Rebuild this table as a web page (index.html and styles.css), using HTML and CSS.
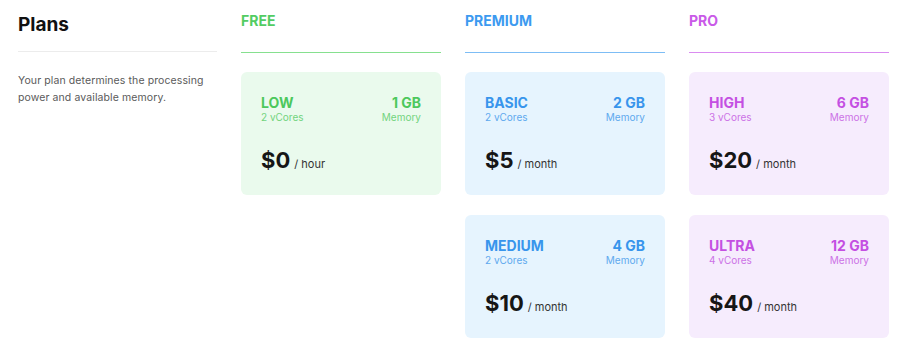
FILE: index.html
```html
<!DOCTYPE html>
<html>
<head>
<meta charset="utf-8">
<link rel="stylesheet" href="styles.css">
</head>
<body>
<div class="page">
  <section class="intro">
    <h1 class="intro-title">Plans</h1>
    <p class="intro-text">Your plan determines the processing<br>power and available memory.</p>
  </section>

  <section class="tier tier-free">
    <h2 class="tier-title">FREE</h2>
    <div class="cards">
      <div class="card">
        <div class="card-top">
          <div><div class="card-name">LOW</div><div class="card-sub">2 vCores</div></div>
          <div class="right"><div class="card-name">1 GB</div><div class="card-sub">Memory</div></div>
        </div>
        <div class="price"><span class="amount">$0</span><span class="unit">/ hour</span></div>
      </div>
    </div>
  </section>

  <section class="tier tier-premium">
    <h2 class="tier-title">PREMIUM</h2>
    <div class="cards">
      <div class="card">
        <div class="card-top">
          <div><div class="card-name">BASIC</div><div class="card-sub">2 vCores</div></div>
          <div class="right"><div class="card-name">2 GB</div><div class="card-sub">Memory</div></div>
        </div>
        <div class="price"><span class="amount">$5</span><span class="unit">/ month</span></div>
      </div>
      <div class="card">
        <div class="card-top">
          <div><div class="card-name">MEDIUM</div><div class="card-sub">2 vCores</div></div>
          <div class="right"><div class="card-name">4 GB</div><div class="card-sub">Memory</div></div>
        </div>
        <div class="price"><span class="amount">$10</span><span class="unit">/ month</span></div>
      </div>
    </div>
  </section>

  <section class="tier tier-pro">
    <h2 class="tier-title">PRO</h2>
    <div class="cards">
      <div class="card">
        <div class="card-top">
          <div><div class="card-name">HIGH</div><div class="card-sub">3 vCores</div></div>
          <div class="right"><div class="card-name">6 GB</div><div class="card-sub">Memory</div></div>
        </div>
        <div class="price"><span class="amount">$20</span><span class="unit">/ month</span></div>
      </div>
      <div class="card">
        <div class="card-top">
          <div><div class="card-name">ULTRA</div><div class="card-sub">4 vCores</div></div>
          <div class="right"><div class="card-name">12 GB</div><div class="card-sub">Memory</div></div>
        </div>
        <div class="price"><span class="amount">$40</span><span class="unit">/ month</span></div>
      </div>
    </div>
  </section>
</div>
</body>
</html>
```

FILE: styles.css
```css
* { box-sizing: border-box; }
html, body { margin: 0; padding: 0; background: #fff; }
body { font-family: Inter, "Noto Sans", sans-serif; color: #1a1a1a; }

.page {
  display: grid;
  grid-template-columns: 200px 200px 200px 200px;
  column-gap: 24px;
  padding: 0 18px 0 17px;
  align-items: start;
}

.intro { padding-left: 1px; }
.intro-title {
  margin: 0;
  height: 52px;
  padding-top: 13px;
  font-size: 19px;
  font-weight: 700;
  line-height: 23px;
  color: #111;
  border-bottom: 1px solid #ececec;
}
.intro-text {
  margin: 20px 0 0;
  white-space: nowrap;
  font-size: 10.5px;
  letter-spacing: 0.1px;
  line-height: 17px;
  color: #5a5a5a;
}

.tier-title {
  margin: 0;
  height: 53px;
  padding-top: 12px;
  font-size: 14px;
  font-weight: 700;
  line-height: 17px;
  border-bottom: 1.5px solid currentColor;
}

.cards {
  display: flex;
  flex-direction: column;
  gap: 20px;
  margin-top: 19px;
}

.card {
  border-radius: 6px;
  padding: 24px 20px 20px;
  height: 123px;
}
.card-top {
  display: flex;
  justify-content: space-between;
}
.right { text-align: right; }
.card-name {
  font-size: 14px;
  font-weight: 700;
  line-height: 14px;
}
.card-sub {
  font-size: 10px;
  line-height: 14px;
}
.price {
  margin-top: 22px;
  display: flex;
  align-items: baseline;
  color: #161616;
}
.amount {
  font-size: 22px;
  font-weight: 700;
  line-height: 28px;
}
.unit {
  font-size: 11px;
  margin-left: 4px;
  color: #333;
}

.tier-free .tier-title { color: #52cc62; border-bottom-color: #86e08f; }
.tier-free .card { background: #eafaed; }
.tier-free .card-name { color: #4cc85c; }
.tier-free .card-sub { color: #72d47e; }

.tier-premium .tier-title { color: #3c9af0; border-bottom-color: #7dbdf5; }
.tier-premium .card { background: #e6f4fe; }
.tier-premium .card-name { color: #3895ec; }
.tier-premium .card-sub { color: #5ea9ee; }

.tier-pro .tier-title { color: #c95ae8; border-bottom-color: #da8cf0; }
.tier-pro .card { background: #f6ecfd; }
.tier-pro .card-name { color: #c450e2; }
.tier-pro .card-sub { color: #cc72e6; }
```
